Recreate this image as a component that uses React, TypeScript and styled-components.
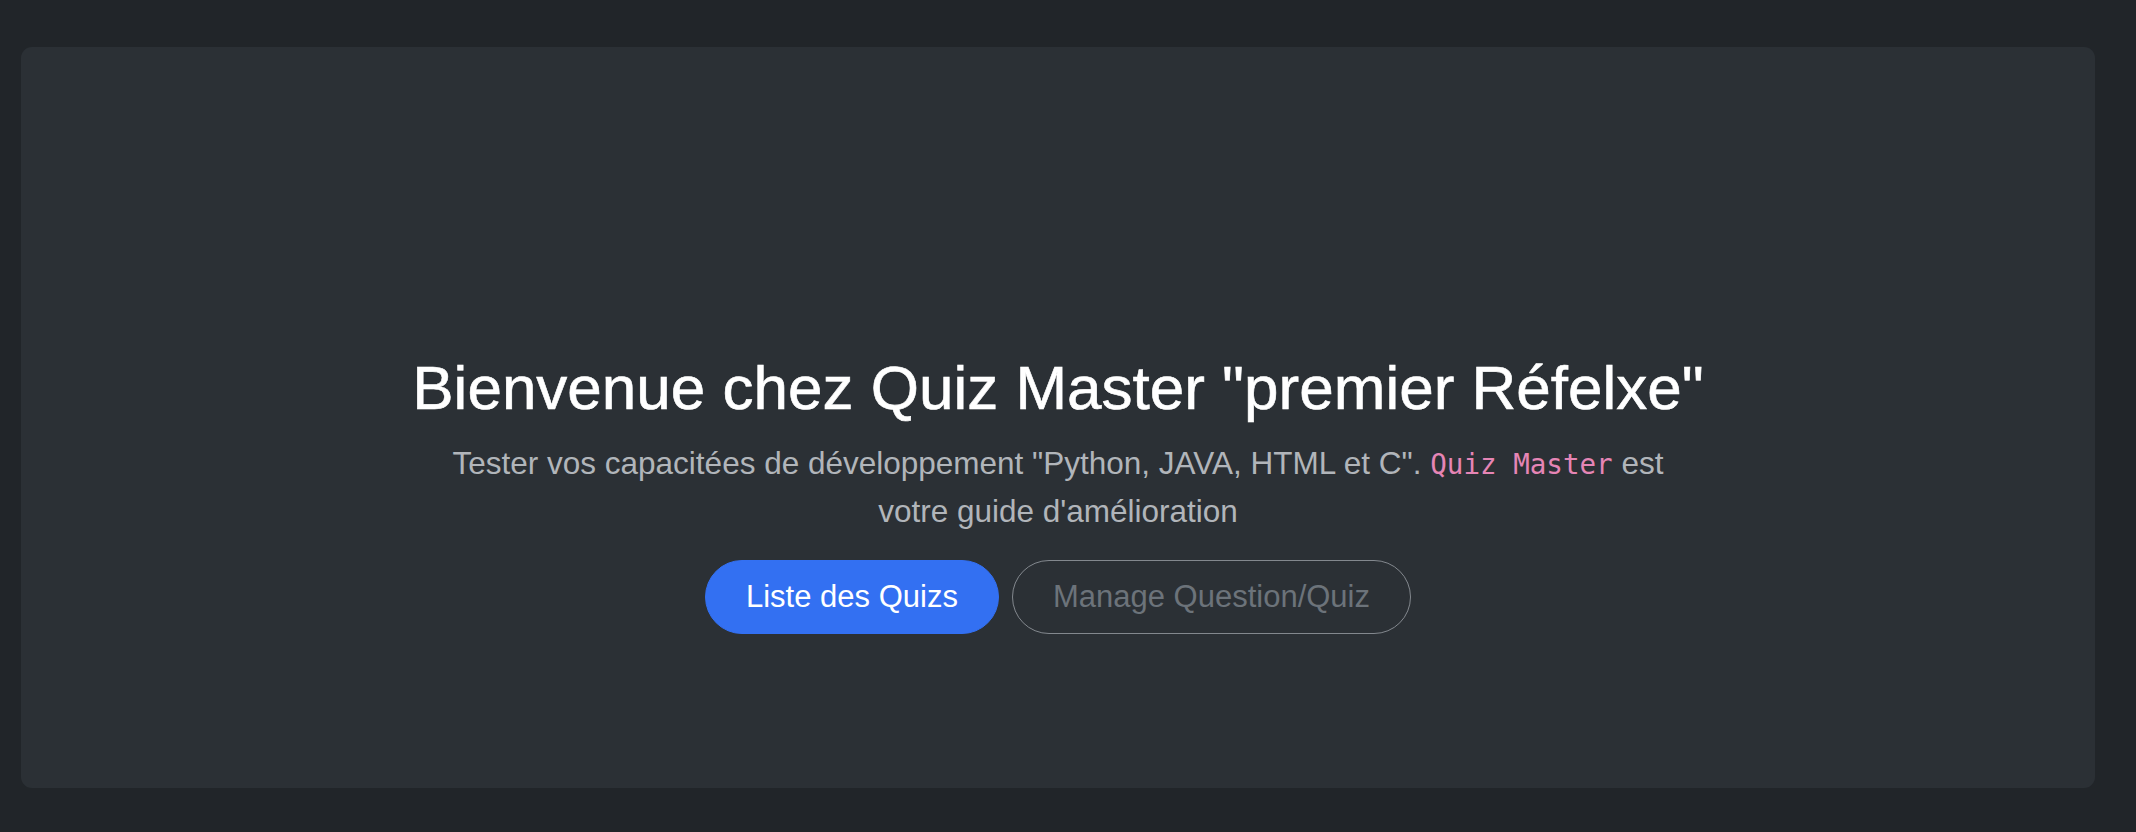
import React from 'react';
import styled, { createGlobalStyle } from 'styled-components';

const GlobalStyle = createGlobalStyle`
  html, body {
    margin: 0;
    padding: 0;
    background-color: #212529;
  }
  body {
    font-family: "Liberation Sans", Arial, sans-serif;
    color: #dee2e6;
  }
`;

const Page = styled.div`
  box-sizing: border-box;
  width: 100%;
  height: 832px;
  padding: 47px 41px 44px 21px;
`;

const Hero = styled.section`
  box-sizing: border-box;
  height: 100%;
  background-color: #2b3035;
  border-radius: 11px;
  padding-top: 304px;
  display: flex;
  flex-direction: column;
  align-items: center;
  text-align: center;
`;

const Title = styled.h1`
  margin: 0 0 15px;
  font-size: 62px;
  font-weight: 500;
  line-height: 1.2;
  color: #ffffff;
  -webkit-text-stroke: 0.6px #ffffff;
`;

const Lead = styled.p`
  margin: 0 0 25px;
  max-width: 1240px;
  font-size: 31.5px;
  line-height: 1.5;
  color: #b1b5ba;
`;

const Code = styled.code`
  font-family: "DejaVu Sans Mono", "Liberation Mono", monospace;
  font-size: 0.875em;
  line-height: 1;
  color: #e685b5;
`;

const Actions = styled.div`
  display: flex;
  gap: 13px;
  justify-content: center;
`;

const Button = styled.button<{ $variant: 'primary' | 'outline' }>`
  font-family: inherit;
  font-size: 31px;
  line-height: 1.5;
  padding: 13px 40px;
  border-radius: 999px;
  cursor: pointer;
  border: 1px solid ${p => (p.$variant === 'primary' ? '#3370f2' : '#83888e')};
  background-color: ${p => (p.$variant === 'primary' ? '#3370f2' : 'transparent')};
  color: ${p => (p.$variant === 'primary' ? '#ffffff' : '#6c737a')};
`;

const App: React.FC = () => {
  return (
    <>
      <GlobalStyle />
      <Page>
        <Hero>
          <Title>Bienvenue chez Quiz Master "premier Réfelxe"</Title>
          <Lead>
            Tester vos capacitées de développement "Python, JAVA, HTML et C".{' '}
            <Code>Quiz Master</Code> est votre guide d'amélioration
          </Lead>
          <Actions>
            <Button $variant="primary">Liste des Quizs</Button>
            <Button $variant="outline">Manage Question/Quiz</Button>
          </Actions>
        </Hero>
      </Page>
    </>
  );
};

export default App;
